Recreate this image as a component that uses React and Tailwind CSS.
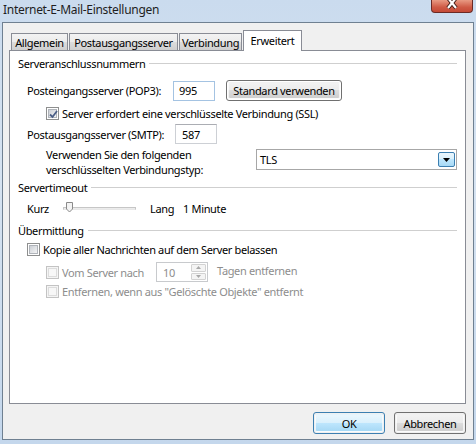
import React from 'react'

function Check({ checked, disabled }) {
  if (disabled) {
    return (
      <span className="w-[13px] h-[13px] shrink-0 border border-[#c3c3c3] bg-[#f4f4f4] p-px flex">
        <span className="flex-1 border border-[#dcdcdc] bg-[#f7f7f7]" />
      </span>
    )
  }
  return (
    <span className="relative w-[13px] h-[13px] shrink-0 border border-[#8e8f8f] bg-white p-px flex">
      <span className="flex-1 border border-[#b0b4ba] bg-[linear-gradient(135deg,#ccd0d6,#f4f4f5)]" />
      {checked && (
        <svg className="absolute left-[1px] top-[1px]" width="11" height="11" viewBox="0 0 11 11">
          <path d="M2 5.5 L4.5 8 L9 2" fill="none" stroke="#4b5e86" strokeWidth="1.8" />
        </svg>
      )}
    </span>
  )
}

function Heading({ children }) {
  return (
    <div className="flex items-center h-[14px]">
      <span>{children}</span>
      <div className="flex-1 h-px bg-[#cfcfcf] ml-[4px]" />
    </div>
  )
}

function Tab({ children, active, className }) {
  if (active) {
    return (
      <div className={`h-[21px] bg-white border border-b-0 border-[#898c95] flex items-center justify-center pb-[1px] ${className}`}>
        {children}
      </div>
    )
  }
  return (
    <div className={`h-[17px] mb-px bg-[linear-gradient(to_bottom,#f3f3f3_0%,#ebebeb_50%,#dddddd_50%,#cfcfcf_100%)] border border-b-0 border-[#898c95] flex items-center justify-center ${className}`}>
      {children}
    </div>
  )
}

function Button({ children, primary, className }) {
  return (
    <div className={`rounded-[3px] border ${primary ? 'border-[#3c7fb1]' : 'border-[#707070]'} p-px ${className}`}>
      <div className={`h-full rounded-[2px] border border-white/70 flex items-center justify-center ${primary ? 'bg-[linear-gradient(to_bottom,#eaf6fd_0%,#d9f0fc_50%,#bee6fd_50%,#a7d9f5_100%)]' : 'bg-[linear-gradient(to_bottom,#f2f2f2_0%,#ebebeb_50%,#dddddd_50%,#cfcfcf_100%)]'}`}>
        {children}
      </div>
    </div>
  )
}

export default function App() {
  return (
    <div className="w-[476px] h-[444px] overflow-hidden flex flex-col px-[2px] pb-[4px] bg-[linear-gradient(to_bottom,#cadbee,#d6e3f1_40%,#c4d7ec)] font-['Noto_Sans',sans-serif] text-[11px] tracking-[-0.35px] text-black leading-none">
      {/* title bar */}
      <div className="h-[22px] shrink-0 flex items-start justify-between">
        <span className="mt-[4px] ml-[1px] text-[12px] tracking-[-0.3px] text-[#1e1e1e]">Internet-E-Mail-Einstellungen</span>
        <div className="w-[42px] h-[13px] mr-[1px] rounded-b-[4px] border border-t-0 border-[#6b2a25] bg-[linear-gradient(to_bottom,#e89a83,#cf5a45_60%,#c44a37)] flex justify-center">
          <svg width="14" height="10" viewBox="0 0 14 10">
            <path d="M3 -2 L11 8 M11 -2 L3 8" stroke="#3b1a14" strokeWidth="4" />
            <path d="M3 -2 L11 8 M11 -2 L3 8" stroke="#ffffff" strokeWidth="2.2" />
          </svg>
        </div>
      </div>

      {/* client area */}
      <div className="flex-1 border border-[#6f8091] bg-[#f0f0f0] flex flex-col pl-[6px] pr-[7px] pt-[7px]">
        <div className="relative z-10 -mb-px flex items-end pl-[2px]">
          <Tab className="w-[57px]">Allgemein</Tab>
          <Tab className="w-[109px] ml-px">Postausgangsserver</Tab>
          <Tab className="w-[63px] ml-px">Verbindung</Tab>
          <Tab active className="w-[59px] ml-px">Erweitert</Tab>
        </div>

        <div className="h-[354px] border border-[#898c95] bg-white flex flex-col px-[8px]">
          <div className="mt-[5px]">
            <Heading>Serveranschlussnummern</Heading>
          </div>

          <div className="mt-[10px] ml-[9px] flex items-center h-[21px]">
            <span className="w-[146px]">Posteingangsserver (POP3):</span>
            <div className="w-[42px] h-[20px] border border-[#a4c3e2] bg-white flex items-center pl-[5px]">995</div>
            <Button className="w-[116px] h-[21px] ml-[11px]">Standard verwenden</Button>
          </div>

          <div className="mt-[6px] ml-[28px] flex items-center h-[13px]">
            <Check checked />
            <span className="ml-[3px]">Server erfordert eine verschlüsselte Verbindung (SSL)</span>
          </div>

          <div className="mt-[4px] ml-[9px] flex items-center h-[20px]">
            <span className="w-[148px]">Postausgangsserver (SMTP):</span>
            <div className="w-[42px] h-[20px] border border-[#cdd0d5] border-t-[#abadb3] bg-white flex items-center pl-[6px]">587</div>
          </div>

          <div className="mt-[3px] ml-[28px] flex items-start">
            <div className="w-[210px] leading-[15px]">
              <div>Verwenden Sie den folgenden</div>
              <div>verschlüsselten Verbindungstyp:</div>
            </div>
            <div className="mt-[2px] w-[201px] h-[21px] border border-[#a7a7a7] bg-white flex items-center justify-between pl-[3px] pr-[1px]">
              <span>TLS</span>
              <div className="w-[17px] h-[15px] border border-[#3c7fb1] rounded-[2px] bg-[linear-gradient(to_bottom,#eaf6fd_0%,#d9f0fc_50%,#bee6fd_50%,#a7d9f5_100%)] flex items-center justify-center">
                <svg width="7" height="4" viewBox="0 0 7 4"><path d="M0 0 H7 L3.5 4 Z" fill="#000" /></svg>
              </div>
            </div>
          </div>

          <div className="mt-[3px]">
            <Heading>Servertimeout</Heading>
          </div>

          <div className="mt-[7px] ml-[9px] flex items-center h-[14px]">
            <span className="w-[36px]">Kurz</span>
            <div className="relative w-[73px] h-[14px] flex items-center">
              <div className="w-full h-[3px] border border-[#c6c6c6] border-b-[#e8e8e8] bg-[#ececec]" />
              <svg className="absolute left-[3px] top-[1px]" width="8" height="11" viewBox="0 0 8 11">
                <path d="M0.5 0.5 H6.5 V7 L3.5 10 L0.5 7 Z" fill="#f3f3f3" stroke="#8a8a8a" />
              </svg>
            </div>
            <span className="ml-[14px]">Lang</span>
            <span className="ml-[9px]">1 Minute</span>
          </div>

          <div className="mt-[8px]">
            <Heading>Übermittlung</Heading>
          </div>

          <div className="mt-[6px] ml-[9px] flex items-center h-[13px]">
            <Check />
            <span className="ml-[3px]">Kopie aller Nachrichten auf dem Server belassen</span>
          </div>

          <div className="mt-[6px] ml-[28px] flex items-center h-[20px] text-[#8d8d8d]">
            <Check disabled />
            <span className="ml-[3px] w-[94px]">Vom Server nach</span>
            <div className="w-[52px] h-[20px] border border-[#c8cacd] bg-white flex items-center justify-between pl-[6px] pr-px">
              <span>10</span>
              <div className="w-[15px] h-[16px] flex flex-col gap-px">
                <div className="flex-1 border border-[#d2d2d2] rounded-[1px] bg-[#f4f4f4] flex items-center justify-center">
                  <svg width="5" height="3" viewBox="0 0 5 3"><path d="M0 3 H5 L2.5 0 Z" fill="#a8a8a8" /></svg>
                </div>
                <div className="flex-1 border border-[#d2d2d2] rounded-[1px] bg-[#f4f4f4] flex items-center justify-center">
                  <svg width="5" height="3" viewBox="0 0 5 3"><path d="M0 0 H5 L2.5 3 Z" fill="#a8a8a8" /></svg>
                </div>
              </div>
            </div>
            <span className="ml-[9px] -mt-[3px]">Tagen entfernen</span>
          </div>

          <div className="mt-[3px] ml-[28px] flex items-center h-[13px] text-[#8d8d8d]">
            <Check disabled />
            <span className="ml-[3px]">Entfernen, wenn aus "Gelöschte Objekte" entfernt</span>
          </div>
        </div>

        <div className="mt-[8px] flex justify-end">
          <Button primary className="w-[72px] h-[22px]">OK</Button>
          <Button className="w-[72px] h-[22px] ml-[9px]">Abbrechen</Button>
        </div>
      </div>
    </div>
  )
}
